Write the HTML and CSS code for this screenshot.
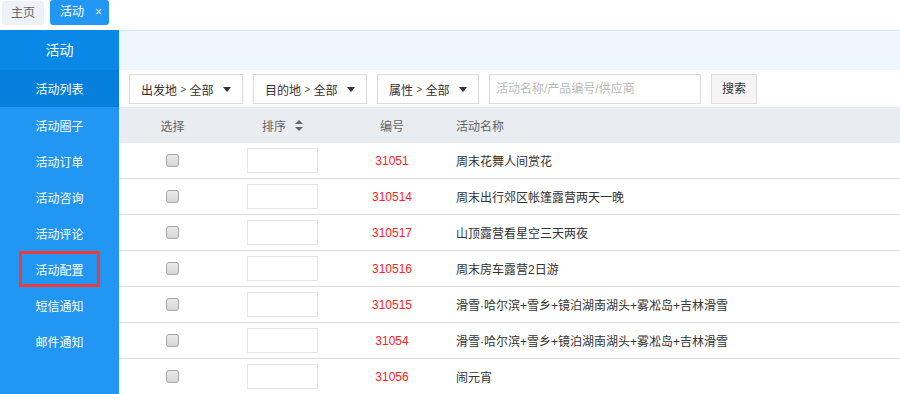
FILE: index.html
```html
<!DOCTYPE html>
<html lang="zh">
<head>
<meta charset="utf-8">
<title>活动</title>
<link rel="stylesheet" href="styles.css">
</head>
<body>
<div class="tabbar">
  <div class="tab">主页</div>
  <div class="tab tab-active">活动<span class="tab-close">×</span></div>
</div>
<div class="main">
  <aside class="sidebar">
    <div class="side-head">活动</div>
    <div class="side-item side-active">活动列表</div>
    <div class="side-item">活动圈子</div>
    <div class="side-item">活动订单</div>
    <div class="side-item">活动咨询</div>
    <div class="side-item">活动评论</div>
    <div class="side-item"><span class="side-mark">活动配置</span></div>
    <div class="side-item">短信通知</div>
    <div class="side-item">邮件通知</div>
  </aside>
  <section class="content">
    <div class="banner"></div>
    <div class="filters">
      <div class="select sel1">出发地 <span class="gt">&gt;</span> 全部<span class="caret"></span></div>
      <div class="select sel2">目的地 <span class="gt">&gt;</span> 全部<span class="caret"></span></div>
      <div class="select sel3">属性 <span class="gt">&gt;</span> 全部<span class="caret"></span></div>
      <div class="search-input">活动名称/产品编号/供应商</div>
      <div class="btn">搜索</div>
    </div>
    <div class="table">
      <div class="row head">
        <div class="c1">选择</div>
        <div class="c2">排序 <svg class="sort" width="8" height="11" viewBox="0 0 8 11"><path d="M4 0 L8 4 L0 4 Z M0 7 L8 7 L4 11 Z" fill="#666"/></svg></div>
        <div class="c3">编号</div>
        <div class="c4">活动名称</div>
      </div>
      <div class="row"><div class="c1"><span class="cb"></span></div><div class="c2"><span class="ord"></span></div><div class="c3 num">31051</div><div class="c4">周末花舞人间赏花</div></div>
      <div class="row"><div class="c1"><span class="cb"></span></div><div class="c2"><span class="ord"></span></div><div class="c3 num">310514</div><div class="c4">周末出行郊区帐篷露营两天一晚</div></div>
      <div class="row"><div class="c1"><span class="cb"></span></div><div class="c2"><span class="ord"></span></div><div class="c3 num">310517</div><div class="c4">山顶露营看星空三天两夜</div></div>
      <div class="row"><div class="c1"><span class="cb"></span></div><div class="c2"><span class="ord"></span></div><div class="c3 num">310516</div><div class="c4">周末房车露营2日游</div></div>
      <div class="row"><div class="c1"><span class="cb"></span></div><div class="c2"><span class="ord"></span></div><div class="c3 num">310515</div><div class="c4">滑雪·哈尔滨+雪乡+镜泊湖南湖头+雾凇岛+吉林滑雪</div></div>
      <div class="row"><div class="c1"><span class="cb"></span></div><div class="c2"><span class="ord"></span></div><div class="c3 num">31054</div><div class="c4">滑雪·哈尔滨+雪乡+镜泊湖南湖头+雾凇岛+吉林滑雪</div></div>
      <div class="row"><div class="c1"><span class="cb"></span></div><div class="c2"><span class="ord"></span></div><div class="c3 num">31056</div><div class="c4">闹元宵</div></div>
    </div>
  </section>
</div>
</body>
</html>
```

FILE: styles.css
```css
* { box-sizing: border-box; }
html, body { margin: 0; padding: 0; }
body {
  width: 900px;
  height: 394px;
  overflow: hidden;
  background: #fff;
  font-family: "Liberation Sans", "Noto Sans CJK SC", sans-serif;
  font-size: 12px;
  color: #333;
}
.tabbar {
  height: 30px;
  display: flex;
  align-items: flex-start;
  padding-left: 2px;
  gap: 6px;
}
.tab {
  margin-top: 1px;
  height: 24px;
  line-height: 24px;
  width: 42px;
  text-align: center;
  background: #eef1f7;
  color: #666;
  border-radius: 3px;
}
.tab-active {
  margin-top: 0;
  height: 25px;
  width: 59px;
  text-align: left;
  padding-left: 10px;
  background: #2196f3;
  color: #fff;
}
.tab-close { margin-left: 11px; font-size: 12px; color: #e8f2fd; }
.main { display: flex; height: 364px; }
.sidebar {
  width: 119px;
  flex: none;
  background: #2196f3;
  color: #fff;
}
.side-head {
  height: 40px;
  line-height: 40px;
  text-align: center;
  background: #0a88e8;
  font-size: 14px;
}
.side-item {
  height: 36px;
  display: flex;
  align-items: center;
  justify-content: center;
}
.side-active { background: #0480dc; height: 37px; }
.side-mark {
  width: 81px;
  height: 36px;
  border: 3px solid #f23a3a;
  display: flex;
  align-items: center;
  justify-content: center;
}
.content {
  flex: 1;
  border-top: 1px solid #d7e6f6;
}
.banner { height: 39px; background: #eef6fe; }
.filters {
  height: 37px;
  display: flex;
  align-items: flex-start;
  gap: 10px;
  padding: 4px 10px;
}
.select {
  height: 30px;
  border: 1px solid #ddd;
  display: flex;
  align-items: center;
  padding-left: 11px;
  color: #333;
  white-space: pre;
}
.gt { font-size: 10px; color: #555; }
.sel1 { width: 114px; }
.sel2 { width: 114px; }
.sel3 { width: 102px; }
.caret {
  margin-left: auto;
  margin-right: 11px;
  width: 0;
  height: 0;
  border-left: 4px solid transparent;
  border-right: 4px solid transparent;
  border-top: 5px solid #333;
}
.search-input {
  width: 212px;
  height: 30px;
  border: 1px solid #ddd;
  padding-left: 6px;
  line-height: 28px;
  color: #bbb;
}
.btn {
  width: 46px;
  height: 30px;
  border: 1px solid #ddd;
  background: #f5f5f5;
  text-align: center;
  line-height: 28px;
  color: #333;
}
.row {
  display: flex;
  height: 36px;
  align-items: center;
  border-bottom: 1px solid #ddd;
}
.head {
  background: #e9ecf0;
  color: #666;
  border-bottom: none;
}
.c1 { width: 107px; text-align: center; display: flex; justify-content: center; }
.c2 { width: 112px; display: flex; justify-content: center; align-items: center; }
.head .c2 { justify-content: flex-start; padding-left: 36px; }
.c3 { width: 108px; text-align: center; }
.c4 { flex: 1; padding-left: 10px; }
.sort { margin-left: 9px; }
.num { color: #ff2020; font-family: "Liberation Sans", sans-serif; }
.cb {
  width: 13px;
  height: 13px;
  border: 1px solid #a6a6a6;
  border-radius: 3px;
  background: linear-gradient(#ececec, #d6d6d6);
}
.ord {
  width: 71px;
  height: 25px;
  border: 1px solid #e6e6e6;
  background: #fff;
}
```
